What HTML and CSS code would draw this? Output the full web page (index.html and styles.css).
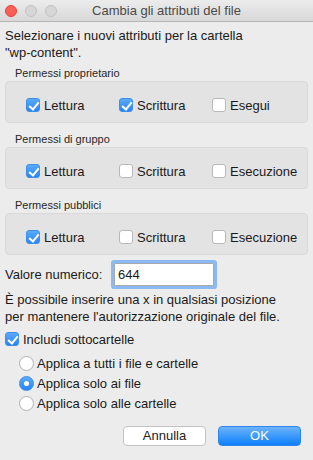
FILE: index.html
```html
<!DOCTYPE html>
<html>
<head>
<meta charset="utf-8">
<link rel="stylesheet" href="styles.css">
</head>
<body>
<div class="window">
  <div class="titlebar">
    <div class="lights">
      <span class="light red"></span>
      <span class="light gray"></span>
      <span class="light gray"></span>
    </div>
    <div class="title">Cambia gli attributi del file</div>
  </div>
  <div class="content">
    <p class="intro">Selezionare i nuovi attributi per la cartella<br>"wp-content".</p>

    <div class="group-label">Permessi proprietario</div>
    <div class="group">
      <label class="cb"><span class="box on"></span>Lettura</label>
      <label class="cb"><span class="box on"></span>Scrittura</label>
      <label class="cb"><span class="box"></span>Esegui</label>
    </div>

    <div class="group-label">Permessi di gruppo</div>
    <div class="group">
      <label class="cb"><span class="box on"></span>Lettura</label>
      <label class="cb"><span class="box"></span>Scrittura</label>
      <label class="cb"><span class="box"></span>Esecuzione</label>
    </div>

    <div class="group-label">Permessi pubblici</div>
    <div class="group">
      <label class="cb"><span class="box on"></span>Lettura</label>
      <label class="cb"><span class="box"></span>Scrittura</label>
      <label class="cb"><span class="box"></span>Esecuzione</label>
    </div>

    <div class="numrow">
      <span class="numlabel">Valore numerico:</span>
      <div class="field">644</div>
    </div>

    <p class="hint">È possibile inserire una x in qualsiasi posizione<br>per mantenere l'autorizzazione originale del file.</p>

    <label class="cb sub"><span class="box on"></span>Includi sottocartelle</label>

    <div class="radios">
      <label class="rb"><span class="radio"></span>Applica a tutti i file e cartelle</label>
      <label class="rb"><span class="radio on"></span>Applica solo ai file</label>
      <label class="rb"><span class="radio"></span>Applica solo alle cartelle</label>
    </div>

    <div class="buttons">
      <div class="btn">Annulla</div>
      <div class="btn primary">OK</div>
    </div>
  </div>
</div>
</body>
</html>
```

FILE: styles.css
```css
* { box-sizing: border-box; }
html, body { margin: 0; padding: 0; }
body {
  width: 313px;
  height: 460px;
  background: #ececec;
  font-family: "Liberation Sans", Arial, sans-serif;
  font-size: 13px;
  color: #1a1a1a;
  overflow: hidden;
}
.window { width: 313px; height: 460px; }
.titlebar {
  height: 22px;
  background: linear-gradient(#ececec, #d8d8d8);
  border-bottom: 1px solid #b6b6b6;
  display: flex;
  align-items: center;
}
.lights {
  display: flex;
  gap: 8px;
  padding-left: 5px;
}
.light {
  width: 12px;
  height: 12px;
  border-radius: 50%;
  display: block;
}
.light.red { background: #fc5f57; border: 1px solid #e0443e; }
.light.gray { background: #d6d6d6; border: 1px solid #c2c2c2; }
.title {
  flex: 1;
  text-align: center;
  color: #4a4a4a;
  font-size: 13px;
  padding-right: 50px;
  padding-left: 13px;
}
.content { padding: 4px 5px 0 5px; }
.intro {
  margin: 0;
  line-height: 17px;
  padding-top: 1px;
}
.group-label {
  font-size: 11px;
  color: #262626;
  padding-left: 10px;
  margin-top: 5px;
  height: 15px;
  line-height: 15px;
}
.group {
  height: 42px;
  background: #e3e3e3;
  border: 1px solid #d9d9d9;
  border-radius: 4px;
  display: grid;
  grid-template-columns: 93px 93px 1fr;
  align-items: center;
  padding-left: 20px;
  padding-top: 6px;
}
.group + .group-label { margin-top: 9px; }
.cb {
  display: flex;
  align-items: center;
  gap: 4px;
  white-space: nowrap;
}
.box {
  width: 14px;
  height: 14px;
  border-radius: 3px;
  background: #fff;
  border: 1px solid #b8b8b8;
  display: block;
  flex: none;
  position: relative;
}
.box.on {
  background: linear-gradient(#5aaaf8, #2a84f5);
  border-color: #3b8fe8;
}
.box.on::after {
  content: "";
  position: absolute;
  left: 4px;
  top: 1px;
  width: 4px;
  height: 8px;
  border: solid #fff;
  border-width: 0 2px 2px 0;
  transform: rotate(40deg);
}
.numrow {
  display: flex;
  align-items: center;
  margin-top: 5px;
  height: 28px;
}
.numlabel { width: 107px; }
.field {
  width: 100px;
  height: 23px;
  background: #fff;
  border: 1px solid #a9a9a9;
  box-shadow: 0 0 0 3px #8ab9f3;
  border-radius: 1px;
  padding-left: 3px;
  line-height: 21px;
  margin-left: 2px;
}
.hint {
  margin: 3px 0 0 0;
  line-height: 17px;
}
.sub { margin-top: 5px; height: 18px; }
.radios {
  padding-left: 14px;
  margin-top: 5px;
}
.rb {
  display: flex;
  align-items: center;
  gap: 3px;
  height: 20px;
  white-space: nowrap;
}
.radio {
  width: 15px;
  height: 15px;
  border-radius: 50%;
  background: #fff;
  border: 1px solid #b0b0b0;
  display: block;
  flex: none;
  position: relative;
}
.radio.on {
  background: linear-gradient(#5aaaf8, #2a84f5);
  border-color: #3b8fe8;
}
.radio.on::after {
  content: "";
  position: absolute;
  left: 4px;
  top: 4px;
  width: 5px;
  height: 5px;
  border-radius: 50%;
  background: #fff;
}
.buttons {
  display: flex;
  justify-content: flex-end;
  gap: 12px;
  margin-top: 13px;
  padding-right: 7px;
}
.btn {
  width: 83px;
  height: 20px;
  border-radius: 4px;
  background: #fff;
  border: 1px solid #c3c3c3;
  text-align: center;
  line-height: 18px;
  color: #222;
}
.btn.primary {
  background: linear-gradient(#6cb3fa, #0d80fc);
  border-color: #2d86ef;
  color: #fff;
}
```
